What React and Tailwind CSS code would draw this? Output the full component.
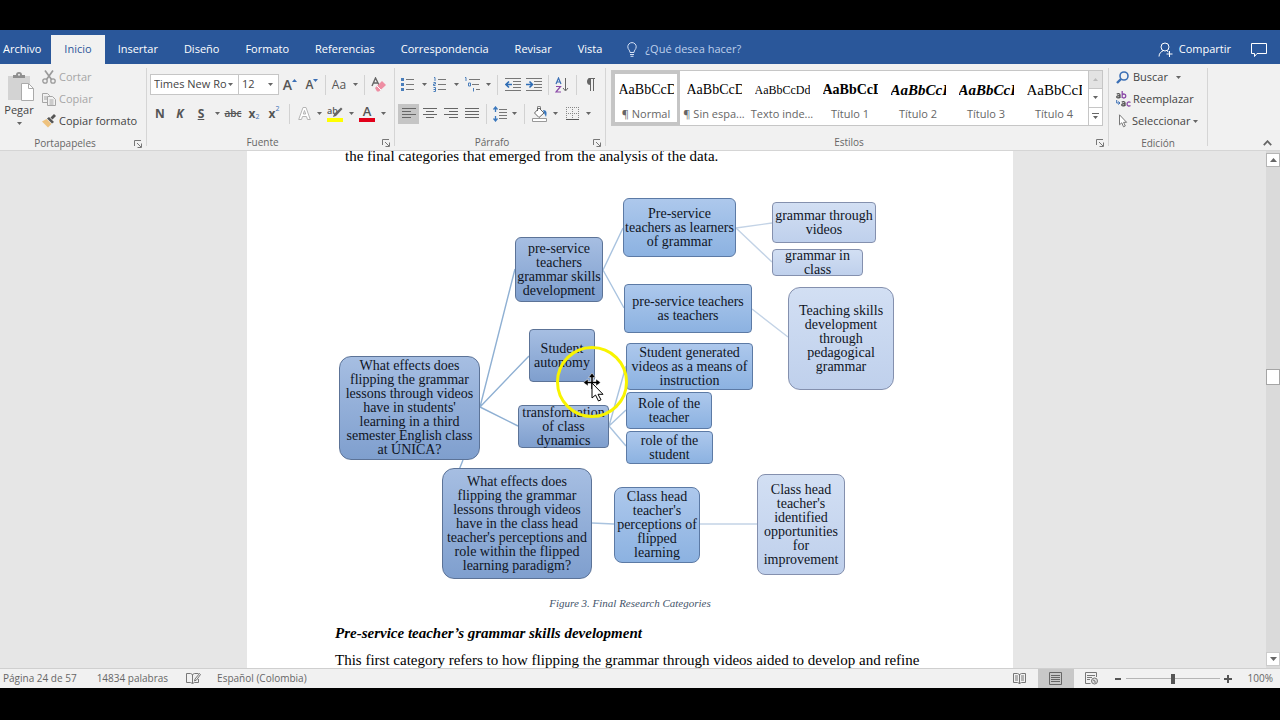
import clsx from 'clsx';

const tabs = ['Archivo', 'Inicio', 'Insertar', 'Diseño', 'Formato', 'Referencias', 'Correspondencia', 'Revisar', 'Vista'];

const styleCards = [
  { name: '¶ Normal', sample: 'AaBbCcD', look: 'text-[14px]', active: true },
  { name: '¶ Sin espa...', sample: 'AaBbCcD', look: 'text-[14px]' },
  { name: 'Texto inde...', sample: 'AaBbCcDd', look: 'text-[12px]' },
  { name: 'Título 1', sample: 'AaBbCcD', look: 'text-[14px] font-bold' },
  { name: 'Título 2', sample: 'AaBbCcD', look: 'text-[15px] font-bold italic' },
  { name: 'Título 3', sample: 'AaBbCcD', look: 'text-[15px] font-bold italic' },
  { name: 'Título 4', sample: 'AaBbCcD', look: 'text-[15px]' },
];

const dark = 'from-[#a6bee2] to-[#7f9fce] border-[#5c7397]';
const mid = 'from-[#adc8ec] to-[#8cb2e1] border-[#5c7aa5]';
const light = 'from-[#d2dff3] to-[#bfd0ec] border-[#8490ae]';

const nodes = [
  { box: 'left-[92px] top-[176px] w-[141px] h-[104px] rounded-xl', tone: dark, lines: ['What effects does', 'flipping the grammar', 'lessons through videos', "have in students'", 'learning in a third', 'semester English class', 'at ÚNICA?'] },
  { box: 'left-[195px] top-[288px] w-[150px] h-[111px] rounded-xl', tone: dark, lines: ['What effects does', 'flipping the grammar', 'lessons through videos', 'have in the class head', "teacher's perceptions and", 'role within the flipped', 'learning paradigm?'] },
  { box: 'left-[268px] top-[57px] w-[88px] h-[65px] rounded-md', tone: dark, lines: ['pre-service', 'teachers', 'grammar skills', 'development'] },
  { box: 'left-[282px] top-[149px] w-[66px] h-[53px] rounded', tone: dark, lines: ['Student', 'autonomy'] },
  { box: 'left-[271px] top-[225px] w-[91px] h-[43px] rounded', tone: dark, lines: ['transformation', 'of class', 'dynamics'] },
  { box: 'left-[376px] top-[18px] w-[113px] h-[59px] rounded-md', tone: mid, lines: ['Pre-service', 'teachers as learners', 'of grammar'] },
  { box: 'left-[377px] top-[104px] w-[128px] h-[49px] rounded', tone: mid, lines: ['pre-service teachers', 'as teachers'] },
  { box: 'left-[379px] top-[163px] w-[127px] h-[47px] rounded', tone: mid, lines: ['Student generated', 'videos as a means of', 'instruction'] },
  { box: 'left-[379px] top-[212px] w-[86px] h-[37px] rounded', tone: mid, lines: ['Role of the', 'teacher'] },
  { box: 'left-[379px] top-[251px] w-[87px] h-[33px] rounded-sm', tone: mid, lines: ['role of the', 'student'] },
  { box: 'left-[367px] top-[307px] w-[86px] h-[76px] rounded-lg', tone: mid, lines: ['Class head', "teacher's", 'perceptions of', 'flipped', 'learning'] },
  { box: 'left-[525px] top-[22px] w-[104px] h-[41px] rounded', tone: light, lines: ['grammar through', 'videos'] },
  { box: 'left-[525px] top-[69px] w-[91px] h-[27px] rounded-sm', tone: light, lines: ['grammar in', 'class'] },
  { box: 'left-[541px] top-[107px] w-[106px] h-[103px] rounded-xl', tone: light, lines: ['Teaching skills', 'development', 'through', 'pedagogical', 'grammar'] },
  { box: 'left-[510px] top-[294px] w-[88px] h-[101px] rounded-lg', tone: light, lines: ['Class head', "teacher's", 'identified', 'opportunities', 'for', 'improvement'] },
];

function Arrow({ className }) {
  return (
    <svg className={className} width="5" height="3" viewBox="0 0 5 3"><path d="M0 0h5L2.500 3z" fill="#666" /></svg>
  );
}

function Caret({ className = 'w-2.5', label = 'Más opciones' }) {
  return (
    <button aria-label={label} className={clsx('flex h-5 shrink-0 items-center justify-center', className)}>
      <Arrow />
    </button>
  );
}

function Tool({ label, className = 'w-5', children }) {
  return (
    <button aria-label={label} className={clsx('flex h-5 shrink-0 items-center justify-center', className)}>
      {children}
    </button>
  );
}

function Divider({ className = 'w-2' }) {
  return (
    <div className={clsx('flex h-5 shrink-0 justify-center', className)}>
      <div className="w-px bg-[#d2d2d2]" />
    </div>
  );
}

function Picker({ label, value, className }) {
  return (
    <div className="relative flex">
      <select aria-label={label} className={clsx('h-[21px] appearance-none border-[#c6c6c6] bg-white pl-[3px] text-[11px] text-[#444]', className)}>
        <option>{value}</option>
      </select>
      <Arrow className="pointer-events-none absolute inset-y-0 right-1.5 my-auto" />
    </div>
  );
}

function Group({ title, className, launcher = true, children }) {
  return (
    <section className={clsx('flex shrink-0 flex-col', className)}>
      <div className="h-[68px] pt-0.5">{children}</div>
      <div className={clsx('relative h-[19px] pt-0.5 text-center text-[10px] leading-[18px] text-[#666]', launcher && 'pr-4')}>
        {title}
        {launcher && (
          <button aria-label={`Opciones de ${title}`} className="absolute right-1 top-2">
            <svg width="8" height="8" viewBox="0 0 8 8" fill="none" stroke="#777"><path d="M.5 6V.5H7M3 3l4 4M7.500 3.500v4h-4" /></svg>
          </button>
        )}
      </div>
    </section>
  );
}

function GroupLine() {
  return <div className="my-1 w-px shrink-0 bg-[#d5d5d5]" />;
}

function Lines({ d }) {
  return (
    <svg width="16" height="14" viewBox="0 0 16 14" stroke="#666" fill="none"><path d={d} /></svg>
  );
}

function TitleBar() {
  return (
    <header className="flex h-[34px] shrink-0 items-stretch bg-[#2a579a] text-[11px] text-white">
      <nav className="flex pt-[5px]">
        {tabs.map((tab) => (
          <a
            key={tab}
            href="#"
            className={clsx(
              'flex items-center',
              tab === 'Archivo' ? 'pl-[3px] pr-2.5' : 'px-[13px]',
              tab === 'Inicio' && 'bg-[#f1f1f1] text-[#2a579a]'
            )}
          >
            {tab}
          </a>
        ))}
      </nav>
      <label className="ml-3 flex items-center gap-2 pt-[5px] text-[#bed0ec]">
        <svg width="10" height="15" viewBox="0 0 10 15" fill="none" stroke="#d5e1f5">
          <path d="M3 10.500C3 8 .8 7.500.8 4.800a4.200 4.200 0 0 1 8.400 0C9.200 7.500 7 8 7 10.500zM3 12.500h4M3.500 14.300h3" />
        </svg>
        <input aria-label="¿Qué desea hacer?" placeholder="¿Qué desea hacer?" className="w-32 bg-transparent placeholder:text-[#bed0ec] focus:outline-none" />
      </label>
      <div className="ml-auto flex items-center gap-5 pr-[13px] pt-[5px]">
        <button className="flex items-center gap-1.5">
          <svg width="15" height="15" viewBox="0 0 15 15" fill="none" stroke="#fff">
            <circle cx="7" cy="5" r="4" /><path d="M1 14.500C1 11 3.500 9.500 5.500 8.500M8.500 8.500l2 1.500M11.500 9v6M8.500 12h6" />
          </svg>
          Compartir
        </button>
        <button aria-label="Comentarios">
          <svg width="16" height="14" viewBox="0 0 16 14" fill="none" stroke="#fff"><path d="M.5.500h15v10H6l-2.500 3v-3h-3z" /></svg>
        </button>
      </div>
    </header>
  );
}

function Clipboard() {
  return (
    <Group title="Portapapeles" className="w-[146px]">
      <div className="flex text-[11px]">
        <button className="flex w-[38px] flex-col items-center pt-1.5 text-[#444]">
          <svg width="28" height="30" viewBox="0 0 28 30" className="ml-1">
            <path d="M1 4h22v24H1z" fill="#d3d3d3" />
            <path d="M6 6V3h3a3 3 0 0 1 6 0h3v3z" fill="#8f8f8f" /><circle cx="12" cy="2.800" r="1" fill="#eee" />
            <path d="M14.500 11.500h7l5 5v12h-12z" fill="#fff" stroke="#aaa" /><path d="M21.500 11.500v5h5" fill="none" stroke="#aaa" />
          </svg>
          <span className="leading-4">Pegar</span>
          <Arrow className="mt-1" />
        </button>
        <div className="flex flex-col pl-1">
          <button disabled className="flex h-[22px] items-center gap-[3px] text-[#a6a6a6]">
            <svg width="14" height="14" viewBox="0 0 14 14" fill="none" stroke="#9a9a9a" strokeWidth="1.300">
              <path d="M3 .5l6.500 9M11 .5L4.500 9.500" strokeWidth="1.700" /><circle cx="3" cy="11" r="2.200" /><circle cx="11" cy="11" r="2.200" />
            </svg>
            Cortar
          </button>
          <button disabled className="flex h-[22px] items-center gap-[3px] text-[#a6a6a6]">
            <svg width="14" height="14" viewBox="0 0 14 14" fill="#f1f1f1" stroke="#a6a6a6">
              <path d="M.5 1.500h5l2 2v7h-7zM2 5h3M2 7h3" /><path d="M5.500 4.500h5l3 3v6h-8zM7.500 8h4M7.500 10h4M7.500 12h4" />
            </svg>
            Copiar
          </button>
          <button className="flex h-[22px] items-center gap-[3px] whitespace-nowrap text-[#444]">
            <svg width="14" height="14" viewBox="0 0 14 14">
              <path d="M0 7.500L4.500 5l5 5L6 13.500z" fill="#eec27e" /><path d="M5 4.500L7 3l5 5-2 1.500z" fill="#555" /><path d="M8.500 3.500L12 0l2 2-3.500 3.500z" fill="#555" />
            </svg>
            Copiar formato
          </button>
        </div>
      </div>
    </Group>
  );
}

function FontGroup() {
  return (
    <Group title="Fuente" className="w-[247px]">
      <div className="flex flex-col gap-2 pl-[3px] pt-2 text-[#555]">
        <div className="flex h-[21px] items-center">
          <Picker label="Fuente" value="Times New Ro" className="w-[89px] border" />
          <Picker label="Tamaño de fuente" value="12" className="w-10 border-y border-r" />
          <Tool label="Aumentar tamaño" className="w-[22px]">
            <span className="text-[14px] font-semibold leading-none">A</span>
            <svg className="mb-2" width="5" height="3" viewBox="0 0 5 3"><path d="M0 3h5L2.500 0z" fill="#3b6fb5" /></svg>
          </Tool>
          <Tool label="Disminuir tamaño" className="w-[22px]">
            <span className="text-[12px] font-semibold leading-none">A</span>
            <svg className="mb-2" width="5" height="3" viewBox="0 0 5 3"><path d="M0 0h5L2.500 3z" fill="#3b6fb5" /></svg>
          </Tool>
          <Divider className="w-1" />
          <Tool label="Cambiar mayúsculas" className="w-6"><span className="text-[12px]">Aa</span></Tool>
          <Caret className="w-2" />
          <Divider className="w-2.5" />
          <Tool label="Borrar formato">
            <svg width="16" height="16" viewBox="0 0 16 16" fill="none">
              <path d="M1 9l3.500-8L8 8M2 6h4.500" stroke="#666" strokeWidth="1.400" />
              <path d="M4 11l7-7 4 4-7 6.500H6z" fill="#ee8ea3" /><path d="M6 9l4 4" stroke="#fff" />
            </svg>
          </Tool>
        </div>
        <div className="flex h-[21px] items-center">
          <Tool label="Negrita"><b className="text-[12px]">N</b></Tool>
          <Tool label="Cursiva"><b className="text-[12px] italic">K</b></Tool>
          <Tool label="Subrayado" className="w-[22px]"><b className="text-[12px] underline">S</b></Tool>
          <Caret />
          <Tool label="Tachado" className="w-[22px]"><span className="text-[10px] font-semibold line-through">abc</span></Tool>
          <Tool label="Subíndice"><b className="text-[12px]">x</b><span className="mt-2 text-[7px] text-[#3b6fb5]">2</span></Tool>
          <Tool label="Superíndice"><b className="text-[12px]">x</b><span className="mb-2 text-[7px] text-[#3b6fb5]">2</span></Tool>
          <Divider className="w-2.5" />
          <Tool label="Efectos de texto">
            <svg width="13" height="13" viewBox="0 0 13 13" fill="#fff" stroke="#b5b5b5"><path d="M.7 12.500L5 .5h3l4.300 12H9.500l-1-3h-4l-1 3zM5.300 7h2.400L6.500 3.500z" /></svg>
          </Tool>
          <Caret />
          <Tool label="Color de resaltado" className="w-[22px]">
            <svg width="17" height="17" viewBox="0 0 17 17">
              <text x="0" y="9" fontSize="9" fontWeight="600" fill="#555">ab</text>
              <path d="M14 2.500l1.500 1.500L9 11l-3 1 1-3z" fill="#666" /><path d="M0 13h16v4H0z" fill="#ff0" />
            </svg>
          </Tool>
          <Caret />
          <Tool label="Color de fuente" className="w-[22px]">
            <svg width="16" height="17" viewBox="0 0 16 17">
              <text x="8" y="11" fontSize="13" fontWeight="600" textAnchor="middle" fill="#555">A</text>
              <path d="M0 13h16v4H0z" fill="#e2001a" />
            </svg>
          </Tool>
          <Caret />
        </div>
      </div>
    </Group>
  );
}

function ParagraphGroup() {
  return (
    <Group title="Párrafo" className="w-[210px]">
      <div className="flex flex-col gap-2 pl-px pt-2">
        <div className="flex h-[21px] items-center">
          <Tool label="Viñetas" className="w-6">
            <svg width="14" height="14" viewBox="0 0 14 14"><path d="M5 1.500h8M5 6.500h8M5 11.500h8" stroke="#777" /><path d="M0 0h3v3H0zM0 5h3v3H0zM0 10h3v3H0z" fill="#4a7ebb" /></svg>
          </Tool>
          <Caret className="w-2" />
          <Tool label="Numeración" className="w-6">
            <svg width="14" height="15" viewBox="0 0 14 15"><path d="M5 2.500h8M5 7.500h8M5 12.500h8" stroke="#777" /><path d="M1 .5h1v3.500M.5 5.500h2v1.500h-2v1.500h2M.5 10.500h2v4h-2M.5 12.500h2" stroke="#4a7ebb" fill="none" /></svg>
          </Tool>
          <Caret className="w-2" />
          <Tool label="Lista multinivel" className="w-6">
            <svg width="16" height="15" viewBox="0 0 16 15"><path d="M5 2.500h11M8 7.500h7M12 12.500h4" stroke="#777" /><path d="M1 .5h1v3.500M4.500 6h2v3h-2zM9.500 11v3.500" stroke="#4a7ebb" fill="none" /></svg>
          </Tool>
          <Caret className="w-2" />
          <Divider className="w-2.5" />
          <Tool label="Disminuir sangría" className="w-[21px]">
            <svg width="16" height="13" viewBox="0 0 16 13" fill="none"><path d="M0 .5h16M8 3.500h8M8 6.500h8M8 9.500h8M0 12.500h16" stroke="#777" /><path d="M7 6.500H1M4 3.500l-3 3 3 3" stroke="#2f6db5" strokeWidth="1.600" /></svg>
          </Tool>
          <Tool label="Aumentar sangría" className="w-[21px]">
            <svg width="16" height="13" viewBox="0 0 16 13" fill="none"><path d="M0 .5h16M8 3.500h8M8 6.500h8M8 9.500h8M0 12.500h16" stroke="#777" /><path d="M0 6.500h6M3.500 3.500l3 3-3 3" stroke="#2f6db5" strokeWidth="1.600" /></svg>
          </Tool>
          <Divider />
          <Tool label="Ordenar">
            <svg width="14" height="16" viewBox="0 0 14 16" fill="none">
              <path d="M1 7l2.500-6L6 7M2 5h3" stroke="#3b6fb5" strokeWidth="1.200" /><path d="M1 9.500h4.500L1 15h5" stroke="#8b4aa8" strokeWidth="1.200" /><path d="M10.500 1v12M8 11l2.500 3 2.500-3" stroke="#666" />
            </svg>
          </Tool>
          <Divider />
          <Tool label="Mostrar todo">
            <svg width="9" height="13" viewBox="0 0 9 13" fill="none"><path d="M4.500 0v13M7.500 0v13M2.500.5H9" stroke="#666" /><path d="M4.500 0A3.500 3.500 0 0 0 4.500 7z" fill="#666" /></svg>
          </Tool>
        </div>
        <div className="flex h-[21px] items-center pl-0.5">
          <Tool label="Alinear a la izquierda" className="w-[21px] bg-[#c5c5c5]"><Lines d="M1 1.500h14M1 4.500h9M1 7.500h14M1 10.500h9" /></Tool>
          <Tool label="Centrar" className="w-[21px]"><Lines d="M1 1.500h14M4 4.500h8M1 7.500h14M4 10.500h8" /></Tool>
          <Tool label="Alinear a la derecha" className="w-[21px]"><Lines d="M1 1.500h14M6 4.500h9M1 7.500h14M6 10.500h9" /></Tool>
          <Tool label="Justificar" className="w-[21px]"><Lines d="M1 1.500h14M1 4.500h14M1 7.500h14M1 10.500h14" /></Tool>
          <Divider />
          <Tool label="Interlineado">
            <svg width="14" height="16" viewBox="0 0 14 16" fill="none"><path d="M6 3.500h8M6 6.500h8M6 9.500h8M6 12.500h8" stroke="#777" /><path d="M2.500 1v5M.5 3.500l2-2.500 2 2.500M2.500 10v5M.5 12.500l2 2.500 2-2.500" stroke="#3b78bd" strokeWidth="1.300" /></svg>
          </Tool>
          <Caret className="w-2" />
          <Divider className="w-3" />
          <Tool label="Sombreado">
            <svg width="16" height="16" viewBox="0 0 16 16" fill="none"><path d="M7 2l5 5-5 4.500L2.500 7z" fill="#fff" stroke="#666" /><path d="M5.500 5V1.500A1.500 1.500 0 0 1 8.500 1.500V4" stroke="#666" /><path d="M11 4c4 0 4 3 3 7l-2-4z" fill="#3b78bd" /><path d="M.5 12.500h14v3H.5z" fill="#fff" stroke="#999" /></svg>
          </Tool>
          <Caret />
          <Tool label="Bordes" className="w-6">
            <svg width="13" height="13" viewBox="0 0 13 13" fill="none"><path d="M.5 0v12M6.500 0v12M12.500 0v12M0 .5h13M0 6.500h13" stroke="#888" strokeDasharray="1 1" /><path d="M0 12.500h13" stroke="#555" /></svg>
          </Tool>
          <Caret className="w-2" />
        </div>
      </div>
    </Group>
  );
}

function StylesGroup() {
  return (
    <Group title="Estilos" className="w-[502px]">
      <div className="ml-[5px] mt-1 flex h-[56px] w-[492px] border border-[#c6c6c6] bg-white">
        {styleCards.map((card) => (
          <button
            key={card.name}
            className={clsx('flex w-[68px] shrink-0 flex-col items-center border-[3px]', card.active ? 'border-[#c5c5c5]' : 'border-transparent')}
          >
            <span className={clsx('mt-1.5 block h-5 w-[55px] overflow-hidden whitespace-nowrap text-left font-["Liberation_Serif",serif] leading-5 text-black', card.look)}>
              {card.sample}
            </span>
            <span className="mt-1.5 whitespace-nowrap text-[11px] leading-4 text-[#666]">{card.name}</span>
          </button>
        ))}
        <div className="flex w-[14px] flex-col divide-y divide-[#c6c6c6] border-l border-[#c6c6c6]">
          <button aria-label="Fila anterior" className="flex flex-1 items-center justify-center bg-[#e3e3e3]"><svg width="5" height="3" viewBox="0 0 5 3"><path d="M0 3h5L2.500 0z" fill="#bbb" /></svg></button>
          <button aria-label="Fila siguiente" className="flex flex-1 items-center justify-center"><Arrow /></button>
          <button aria-label="Más estilos" className="flex flex-1 items-center justify-center"><svg width="7" height="6" viewBox="0 0 7 6"><path d="M0 0h7v1H0zM1 3h5L3.500 6z" fill="#666" /></svg></button>
        </div>
      </div>
    </Group>
  );
}

function EditGroup() {
  return (
    <Group title="Edición" className="w-[98px]" launcher={false}>
      <div className="flex flex-col pl-[7px] text-[11px] text-[#444]">
        <button className="flex h-[22px] items-center gap-1">
          <svg width="13" height="13" viewBox="0 0 13 13" fill="none" stroke="#3b6fb5"><circle cx="8" cy="5" r="4" strokeWidth="1.600" /><path d="M5 8L1 12" strokeWidth="2.400" /></svg>
          Buscar
          <Arrow className="ml-1" />
        </button>
        <button className="flex h-[22px] items-center gap-0.5 whitespace-nowrap">
          {/* ab over ac */}
          <svg width="15" height="16" viewBox="0 0 15 16" fill="none" strokeWidth="1.300">
            <g stroke="#555">
              <path d="M.8 3.200c1-1 3.200-.8 3.200.8v3M4 4.800C2 4.600.7 5 .7 6s2 1.500 3.300 0" />
              <path d="M5.800 11.200c1-1 3.200-.8 3.200.8v3M9 12.800c-2-.2-3.300.2-3.300 1.200s2 1.500 3.300 0" />
            </g>
            <g stroke="#8b4aa8">
              <path d="M6.200 0v7M6.200 4c1-1.600 3.600-1.200 3.600 1s-2.600 2.600-3.600 1" />
              <path d="M14.500 11.500c-1.500-1.200-3.500-.5-3.500 1.500s2 2.700 3.500 1.500" />
            </g>
            <path d="M.7 9v3h3M2.300 10.500L4 12l-1.700 1.500" stroke="#3b6fb5" strokeWidth="1" />
          </svg>
          Reemplazar
        </button>
        <button className="flex h-[22px] items-center gap-[3px] whitespace-nowrap">
          <svg width="13" height="14" viewBox="0 0 13 14" fill="#fff" stroke="#777"><path d="M3.500.8v10l2.300-2 1.700 4 1.800-.8-1.700-3.700h3z" /></svg>
          Seleccionar
          <Arrow />
        </button>
      </div>
    </Group>
  );
}

function Diagram() {
  return (
    <figure className="relative h-[410px]">
      <svg className="absolute left-0 top-0" width="766" height="410" viewBox="0 0 766 410" fill="none" strokeWidth="1.400">
        <path d="M233 227L268 89M233 227l49-51M233 227l38 19M216 280l-4 10" stroke="#8fb0d3" />
        <path d="M356 90l20-42M356 90l21 38M362 246l17-60M362 246l17-16M362 246l17 20M345 343l22 1" stroke="#a9c3df" />
        <path d="M489 48l36-5M489 48l36 34M505 129l36 28M453 344h57" stroke="#c3d3e6" />
      </svg>
      {nodes.map((node) => (
        <div
          key={node.box}
          className={clsx('absolute flex flex-col items-center justify-center whitespace-nowrap border bg-linear-to-b text-[14px] leading-[14px] text-[#10151f]', node.box, node.tone)}
        >
          {node.lines.map((line) => (
            <span key={line}>{line}</span>
          ))}
        </div>
      ))}
      {/* move pointer with its highlight ring */}
      <svg className="absolute left-[308px] top-[164px]" width="74" height="76" viewBox="0 0 74 76" fill="none">
        <circle cx="37" cy="38" r="34.500" stroke="#f8f400" strokeWidth="3" />
        <path d="M37 31V45M30 38.500H44" stroke="#fff" strokeWidth="3" />
        <path d="M37 29l3.500 4.500h-7zM28.500 38.500l4.500-3.500v7zM45.500 38.500L41 35v7z" fill="#000" stroke="#fff" strokeWidth=".5" />
        <path d="M37 31V45M30 38.500H44" stroke="#000" strokeWidth="1.500" />
        <path d="M37 39v15l3.500-3 3 6 2.500-1.200-3-5.500h5z" fill="#fff" stroke="#000" />
      </svg>
    </figure>
  );
}

function VerticalScroll() {
  return (
    <div className="flex w-3.5 shrink-0 flex-col items-center bg-[#dadada]">
      <button aria-label="Subir" className="mt-0.5 flex h-3.5 w-3.5 shrink-0 items-center justify-center border border-[#b5b5b5] bg-white"><svg width="7" height="4" viewBox="0 0 7 4"><path d="M0 4h7L3.500 0z" fill="#666" /></svg></button>
      <div className="grow-[202]" />
      <div className="h-4 w-3.5 shrink-0 border border-[#a5a5a5] bg-white" />
      <div className="grow-[267]" />
      <button aria-label="Bajar" className="mb-0.5 flex h-3.5 w-3.5 shrink-0 items-center justify-center border border-[#ccc] bg-white"><svg width="7" height="4" viewBox="0 0 7 4"><path d="M0 0h7L3.500 4z" fill="#666" /></svg></button>
    </div>
  );
}

function StatusBar() {
  return (
    <footer className="flex h-5 shrink-0 items-center border-t border-[#cfcfcf] bg-[#f1f1f1] pl-[3px] pr-[7px] text-[10px] text-[#666]">
      <span>Página 24 de 57</span>
      <span className="ml-5">14834 palabras</span>
      <button aria-label="Revisión" className="ml-[18px]">
        <svg width="15" height="13" viewBox="0 0 15 13" fill="none" stroke="#777"><path d="M.5 1.500h4l2 1v9l-2-1h-4zM6.500 2.500l2-1h4M6.500 11.500l2-1h4V7M13.500 1.500L9 7l-.5 2 2-1 4-5.500z" /></svg>
      </button>
      <span className="ml-4">Español (Colombia)</span>
      <div className="ml-auto flex h-full items-center">
        <button aria-label="Modo de lectura" className="flex w-9 justify-center">
          <svg width="13" height="13" viewBox="0 0 13 13" fill="none" stroke="#777"><path d="M.5 1.500h4l2 1 2-1h4v9h-4l-2 1-2-1h-4zM6.500 2v10M2 4h3M2 6h3M2 8h3M8 4h3M8 6h3M8 8h3" /></svg>
        </button>
        <button aria-label="Diseño de impresión" className="flex h-full w-9 items-center justify-center bg-[#c8c8c8]">
          <svg width="13" height="13" viewBox="0 0 13 13" fill="none" stroke="#666"><path d="M.5.500h12v12H.5zM2 3.500h9M2 5.500h9M2 7.500h9M2 9.500h9" /></svg>
        </button>
        <button aria-label="Diseño web" className="flex w-9 justify-center">
          <svg width="13" height="13" viewBox="0 0 13 13" fill="none" stroke="#777"><path d="M11.500 5V.5H.5v11h5M2 3.500h8M2 5.500h5M2 7.500h3" /><circle cx="9.500" cy="9" r="3" fill="#ddd" /><path d="M8 8l2 1v2" /></svg>
        </button>
        <button aria-label="Alejar" className="flex w-4 justify-center"><svg width="6" height="2" viewBox="0 0 6 2"><path d="M0 0h6v2H0z" fill="#555" /></svg></button>
        <input
          type="range"
          aria-label="Zoom"
          defaultValue="50"
          className="h-3 w-[94px] appearance-none bg-[linear-gradient(#b5b5b5,#b5b5b5)] bg-[length:100%_1px] bg-center bg-no-repeat [&::-webkit-slider-thumb]:h-2.5 [&::-webkit-slider-thumb]:w-1 [&::-webkit-slider-thumb]:appearance-none [&::-webkit-slider-thumb]:bg-[#555]"
        />
        <button aria-label="Acercar" className="flex w-4 justify-center"><svg width="8" height="8" viewBox="0 0 8 8"><path d="M3 0h2v3h3v2H5v3H3V5H0V3h3z" fill="#555" /></svg></button>
        <span className="ml-3">100%</span>
      </div>
    </footer>
  );
}

export default function App() {
  return (
    <div className="h-screen bg-black pb-8 pt-[30px] font-['Open_Sans',sans-serif]">
      <div className="flex h-full flex-col overflow-hidden bg-[#f1f1f1]">
        <TitleBar />
        <div className="relative flex h-[87px] shrink-0 border-b border-[#d5d5d5] bg-[#f1f1f1]">
          <Clipboard />
          <GroupLine />
          <FontGroup />
          <GroupLine />
          <ParagraphGroup />
          <GroupLine />
          <StylesGroup />
          <GroupLine />
          <EditGroup />
          <GroupLine />
          <button aria-label="Contraer la cinta" className="mb-1 ml-auto mr-2 self-end">
            <svg width="9" height="6" viewBox="0 0 9 6" fill="none" stroke="#666" strokeWidth="1.800"><path d="M.8 5.200l3.700-4 3.700 4" /></svg>
          </button>
        </div>
        <div className="flex min-h-0 flex-1">
          <main className="flex min-w-0 flex-1 justify-center overflow-hidden bg-[#e6e6e6] pr-1.5">
            <article className="w-[766px] shrink-0 bg-white font-['Liberation_Serif',serif] text-[15px] text-black">
              <p className="-mt-1 mb-[15px] pl-[98px] leading-[18px]">the final categories that emerged from the analysis of the data.</p>
              <Diagram />
              <p className="mt-[3px] text-center text-[11px] italic leading-5 text-[#44546a]">Figure 3. Final Research Categories</p>
              <h2 className="mt-[10px] pl-[88px] font-bold italic leading-5">Pre-service teacher’s grammar skills development</h2>
              <p className="mt-[7px] pl-[88px] leading-5">This first category refers to how flipping the grammar through videos aided to develop and refine</p>
            </article>
          </main>
          <VerticalScroll />
        </div>
        <StatusBar />
      </div>
    </div>
  );
}
